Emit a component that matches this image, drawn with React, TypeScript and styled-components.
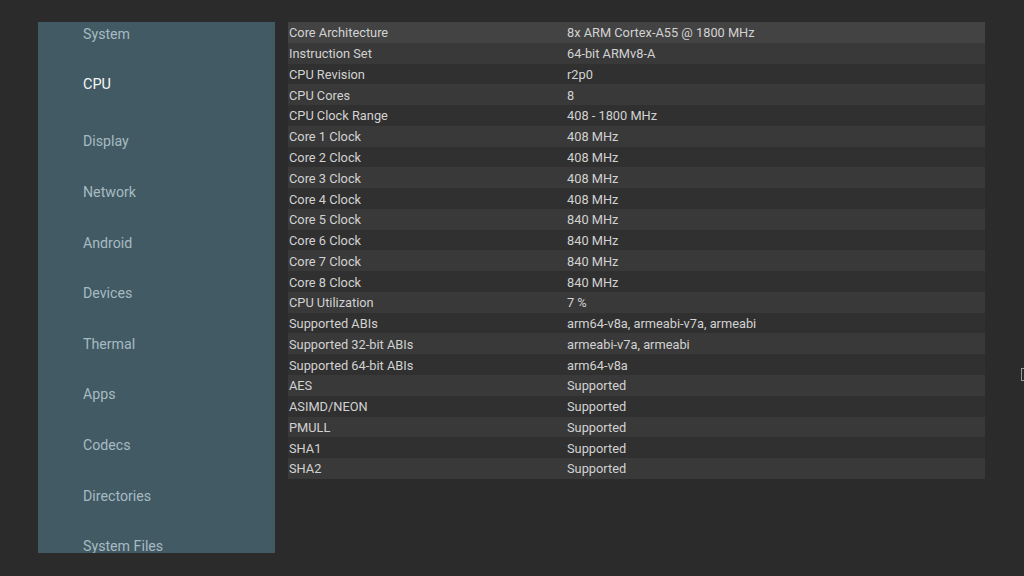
import styled, { createGlobalStyle } from 'styled-components';

const GlobalStyle = createGlobalStyle`
  html, body {
    margin: 0;
    padding: 0;
    background: #2b2b2b;
    font-family: Roboto, 'Noto Sans', sans-serif;
  }
`;

const menu = [
  'System',
  'CPU',
  'Display',
  'Network',
  'Android',
  'Devices',
  'Thermal',
  'Apps',
  'Codecs',
  'Directories',
  'System Files'
];

const rows = [
  ['Core Architecture', '8x ARM Cortex-A55 @ 1800 MHz'],
  ['Instruction Set', '64-bit ARMv8-A'],
  ['CPU Revision', 'r2p0'],
  ['CPU Cores', '8'],
  ['CPU Clock Range', '408 - 1800 MHz'],
  ['Core 1 Clock', '408 MHz'],
  ['Core 2 Clock', '408 MHz'],
  ['Core 3 Clock', '408 MHz'],
  ['Core 4 Clock', '408 MHz'],
  ['Core 5 Clock', '840 MHz'],
  ['Core 6 Clock', '840 MHz'],
  ['Core 7 Clock', '840 MHz'],
  ['Core 8 Clock', '840 MHz'],
  ['CPU Utilization', '7 %'],
  ['Supported ABIs', 'arm64-v8a, armeabi-v7a, armeabi'],
  ['Supported 32-bit ABIs', 'armeabi-v7a, armeabi'],
  ['Supported 64-bit ABIs', 'arm64-v8a'],
  ['AES', 'Supported'],
  ['ASIMD/NEON', 'Supported'],
  ['PMULL', 'Supported'],
  ['SHA1', 'Supported'],
  ['SHA2', 'Supported']
];

export default function App() {
  return (
    <>
      <GlobalStyle />
      <Screen>
        <Sidebar>
          <MenuList>
            {menu.map((item) => (
              <MenuItem key={item} $active={item === 'CPU'}>
                {item}
              </MenuItem>
            ))}
          </MenuList>
        </Sidebar>
        <InfoTable>
          {rows.map(([label, value], index) => (
            <InfoRow key={label} $tone={index === 0 ? 'focus' : index % 2 ? 'light' : 'dark'}>
              <Label>{label}</Label>
              <Value>{value}</Value>
            </InfoRow>
          ))}
        </InfoTable>
        <Cursor />
      </Screen>
    </>
  );
}

const Screen = styled.div`
  position: relative;
  width: 1024px;
  height: 576px;
  box-sizing: border-box;
  padding: 22px 0 0 38px;
  display: flex;
  align-items: flex-start;
  gap: 13px;
  overflow: hidden;
`;

const Sidebar = styled.nav`
  width: 237px;
  height: 531px;
  background: #425a63;
  overflow: hidden;
  flex-shrink: 0;
`;

const MenuList = styled.div`
  margin-top: -13px;
  display: flex;
  flex-direction: column;
`;

const MenuItem = styled.div<{ $active: boolean }>`
  height: 50.6px;
  flex-shrink: 0;
  display: flex;
  align-items: center;
  padding-left: 45px;
  font-size: ${(p) => (p.$active ? '14.5px' : '14.2px')};
  color: ${(p) => (p.$active ? '#f2f6f7' : '#a6bac2')};
  margin-bottom: ${(p) => (p.$active ? '6px' : '0')};
`;

const InfoTable = styled.div`
  width: 697px;
  display: flex;
  flex-direction: column;
`;

const tones = {
  focus: '#434343',
  light: '#393939',
  dark: '#303030'
};

const InfoRow = styled.div<{ $tone: 'focus' | 'light' | 'dark' }>`
  height: 20.77px;
  padding-top: 1px;
  box-sizing: border-box;
  display: flex;
  align-items: center;
  background: ${(p) => tones[p.$tone]};
  font-size: 12.8px;
  color: #d2d2d2;
`;

const Label = styled.div`
  width: 278px;
  padding-left: 1px;
  white-space: nowrap;
`;

const Value = styled.div`
  flex: 1;
  white-space: nowrap;
`;

const Cursor = styled.div`
  position: absolute;
  left: 1021px;
  top: 368px;
  width: 4px;
  height: 13px;
  border: 1px solid #9a9a9a;
  border-right: none;
  box-sizing: border-box;
`;
